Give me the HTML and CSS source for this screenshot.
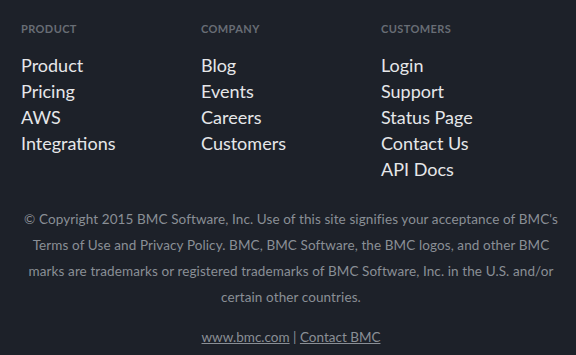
FILE: index.html
```html
<!DOCTYPE html>
<html lang="en">
<head>
    <meta charset="UTF-8">
    <meta name="viewport" content="width=device-width, initial-scale=1.0">
    <title>Footer</title>
    <link rel="stylesheet" href="styles.css">
</head>
<body>
    <footer class="footer">
        <div class="footer-columns">
            <div class="footer-col">
                <h4 class="col-title">Product</h4>
                <ul class="col-links">
                    <li><a href="#">Product</a></li>
                    <li><a href="#">Pricing</a></li>
                    <li><a href="#">AWS</a></li>
                    <li><a href="#">Integrations</a></li>
                </ul>
            </div>
            <div class="footer-col">
                <h4 class="col-title">Company</h4>
                <ul class="col-links">
                    <li><a href="#">Blog</a></li>
                    <li><a href="#">Events</a></li>
                    <li><a href="#">Careers</a></li>
                    <li><a href="#">Customers</a></li>
                </ul>
            </div>
            <div class="footer-col">
                <h4 class="col-title">Customers</h4>
                <ul class="col-links">
                    <li><a href="#">Login</a></li>
                    <li><a href="#">Support</a></li>
                    <li><a href="#">Status Page</a></li>
                    <li><a href="#">Contact Us</a></li>
                    <li><a href="#">API Docs</a></li>
                </ul>
            </div>
        </div>

        <p class="copyright">&copy; Copyright 2015 BMC Software, Inc. Use of this site signifies your acceptance of BMC's Terms of Use and Privacy Policy. BMC, BMC Software, the BMC logos, and other BMC marks are trademarks or registered trademarks of BMC Software, Inc. in the U.S. and/or certain other countries.</p>

        <p class="bottom-links"><a href="#">www.bmc.com</a> | <a href="#">Contact BMC</a></p>
    </footer>
</body>
</html>
```
FILE: styles.css
```css
body {
    margin: 0;
    background: #1d2129;
    font-family: 'Lato', 'Open Sans', sans-serif;
    color: #e6e7e9;
}
.footer {
    width: 540px;
    padding: 18px 0 0 21px;
}
.footer-columns {
    display: grid;
    grid-template-columns: 180px 180px 180px;
}
.col-title {
    margin: 0 0 12px 0;
    font-size: 11px;
    line-height: 22px;
    font-weight: 700;
    text-transform: uppercase;
    color: #686d75;
    letter-spacing: 0.4px;
}
.col-links {
    list-style: none;
    margin: 0;
    padding: 0;
}
.col-links li {
    font-size: 18px;
    line-height: 26px;
}
.col-links a {
    color: #e6e7e9;
    text-decoration: none;
}
.copyright {
    margin: 24px 0 0 0;
    text-align: center;
    font-size: 13.5px;
    line-height: 26px;
    letter-spacing: 0.1px;
    color: #8a8f96;
}
.bottom-links {
    margin: 14px 0 0 0;
    text-align: center;
    font-size: 13.5px;
    line-height: 26px;
    color: #8a8f96;
}
.bottom-links a {
    color: #8a8f96;
    text-decoration: underline;
}
```
